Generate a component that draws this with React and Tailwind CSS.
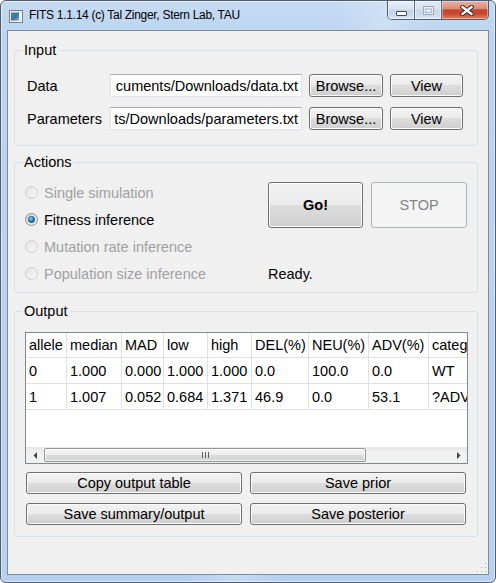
import React from 'react';

const btn =
  'flex items-center justify-center rounded-[3px] border border-[#707070] bg-[linear-gradient(180deg,#f2f2f2_0%,#ebebeb_50%,#dddddd_50%,#cfcfcf_100%)] shadow-[inset_0_0_0_1px_#fbfbfb] text-black';

const COLS = ['allele', 'median', 'MAD', 'low', 'high', 'DEL(%)', 'NEU(%)', 'ADV(%)', 'categ'];
const ROWS = [
  ['0', '1.000', '0.000', '1.000', '1.000', '0.0', '100.0', '0.0', 'WT'],
  ['1', '1.007', '0.052', '0.684', '1.371', '46.9', '0.0', '53.1', '?ADV'],
];

function TitleIcon() {
  return (
    <svg width="14" height="13" viewBox="0 0 14 13" className="ml-[8px] mt-[9px] shrink-0">
      <defs>
        <linearGradient id="ti" x1="0" y1="0" x2="1" y2="1">
          <stop offset="0" stopColor="#3d9a86" />
          <stop offset="0.55" stopColor="#3b74a8" />
          <stop offset="1" stopColor="#8fb0cf" />
        </linearGradient>
      </defs>
      <rect x="0.5" y="0.5" width="13" height="12" fill="#e9ecef" stroke="#7b8088" />
      <rect x="2" y="2.5" width="8" height="8" fill="url(#ti)" />
      <rect x="11" y="3" width="1.4" height="3" fill="#ffffff" />
      <rect x="11" y="7" width="1.4" height="1.4" fill="#ffffff" />
    </svg>
  );
}

function CaptionButtons() {
  return (
    <div className="ml-auto mr-[6px] flex h-[19px] shrink-0 overflow-hidden rounded-b-[5px] border-x border-b border-[#4f5f71]">
      <div className="flex w-[26px] justify-center bg-[linear-gradient(180deg,#e8eff8_0%,#d8e4f2_45%,#c3d4e9_50%,#c8d9ed_80%,#dbe8f6_100%)] pt-[10px] shadow-[inset_0_0_0_1px_rgba(255,255,255,0.55)]">
        <svg width="11" height="5" viewBox="0 0 11 5">
          <rect x="0.5" y="0.5" width="10" height="4" rx="0.5" fill="#ffffff" stroke="#394b60" />
        </svg>
      </div>
      <div className="w-px bg-[#5b6b7d]" />
      <div className="flex w-[26px] justify-center bg-[linear-gradient(180deg,#e3ebf5_0%,#d6e1ee_45%,#c9d7e8_50%,#cfdcec_80%,#dde8f4_100%)] pt-[5px] shadow-[inset_0_0_0_1px_rgba(255,255,255,0.5)]">
        <svg width="11" height="9" viewBox="0 0 11 9">
          <rect x="0.5" y="0.5" width="10" height="8" fill="#e6edf6" stroke="#9aabbf" />
          <rect x="2.5" y="3" width="6" height="3.5" fill="none" stroke="#a9b8ca" />
        </svg>
      </div>
      <div className="w-px bg-[#5b6b7d]" />
      <div className="flex w-[46px] justify-center bg-[linear-gradient(180deg,#eab1a4_0%,#de8c7a_42%,#c6432e_50%,#c74a33_72%,#e28061_100%)] pt-[4px] pl-[3px] shadow-[inset_0_0_0_1px_rgba(255,255,255,0.4)]">
        <svg width="14" height="11" viewBox="0 0 14 11">
          <path d="M2.5 2 L11.5 9 M11.5 2 L2.5 9" stroke="#3a2a28" strokeWidth="4.2" strokeLinecap="square" />
          <path d="M2.5 2 L11.5 9 M11.5 2 L2.5 9" stroke="#ffffff" strokeWidth="2.3" strokeLinecap="square" />
        </svg>
      </div>
    </div>
  );
}

function Radio({ label, checked, disabled }) {
  return (
    <div className="flex h-[27px] items-center">
      <svg width="13" height="13" viewBox="0 0 13 13" className="shrink-0">
        <defs>
          <linearGradient id="rbOn" x1="0" y1="0" x2="1" y2="1">
            <stop offset="0" stopColor="#d0d0d0" />
            <stop offset="1" stopColor="#f8f8f8" />
          </linearGradient>
          <linearGradient id="rbOff" x1="0" y1="0" x2="1" y2="1">
            <stop offset="0" stopColor="#e4e4e4" />
            <stop offset="1" stopColor="#f7f7f7" />
          </linearGradient>
          <radialGradient id="rdot" cx="0.4" cy="0.35" r="0.75">
            <stop offset="0" stopColor="#92d4f8" />
            <stop offset="0.55" stopColor="#2b7cba" />
            <stop offset="1" stopColor="#1a4d7a" />
          </radialGradient>
        </defs>
        <circle
          cx="6.5"
          cy="6.5"
          r="6"
          fill={disabled ? 'url(#rbOff)' : 'url(#rbOn)'}
          stroke={disabled ? '#cdcdcd' : '#8e8f8f'}
        />
        {checked && <circle cx="6.5" cy="6.5" r="3.2" fill="url(#rdot)" stroke="#1f4f78" strokeWidth="0.6" />}
      </svg>
      <span className={`ml-[6px] whitespace-nowrap ${disabled ? 'text-[#a0a0a0]' : 'text-black'}`}>{label}</span>
    </div>
  );
}

function PathRow({ label, value }) {
  return (
    <div className="flex h-[23px] items-center">
      <span className="w-[83px] shrink-0">{label}</span>
      <div className="flex h-[23px] w-[192px] shrink-0 items-center justify-end overflow-hidden border border-[#e2e3ea] border-t-[#abadb3] bg-white pr-[3px]">
        <span className="shrink-0 whitespace-nowrap">{value}</span>
      </div>
      <button className={`${btn} ml-[7px] h-[23px] w-[74px]`}>Browse...</button>
      <button className={`${btn} ml-[7px] h-[23px] w-[73px]`}>View</button>
    </div>
  );
}

function TableRow({ cells, h }) {
  return (
    <div className={`grid shrink-0 grid-cols-[41px_55px_42px_44px_44px_57px_60px_60px_38px] ${h}`}>
      {cells.map((c, i) => (
        <div
          key={i}
          className={`flex items-center overflow-hidden whitespace-nowrap border-b border-[#e0e0e0] pl-[3px] ${i < cells.length - 1 ? 'border-r' : ''}`}
        >
          {c}
        </div>
      ))}
    </div>
  );
}

function Scrollbar() {
  return (
    <div className="flex h-[16px] shrink-0 items-center bg-[linear-gradient(180deg,#e6e6e6_0%,#f1f1f1_35%,#f1f1f1_100%)]">
      <div className="flex h-full w-[17px] items-center justify-center">
        <svg width="4" height="7" viewBox="0 0 4 7">
          <path d="M4 0 L0.5 3.5 L4 7 Z" fill="#404040" />
        </svg>
      </div>
      <div className="ml-[1px] flex h-[14px] w-[322px] items-center justify-center rounded-[2px] border border-[#979797] bg-[linear-gradient(180deg,#f6f6f6_0%,#ececec_50%,#dcdcdc_50%,#d2d2d2_100%)] shadow-[inset_0_0_0_1px_rgba(255,255,255,0.7)]">
        <svg width="7" height="6" viewBox="0 0 7 6">
          <path d="M0.5 0 V6 M3.5 0 V6 M6.5 0 V6" stroke="#5e5e5e" strokeWidth="1" />
        </svg>
      </div>
      <div className="ml-auto flex h-full w-[17px] items-center justify-center">
        <svg width="4" height="7" viewBox="0 0 4 7">
          <path d="M0 0 L3.5 3.5 L0 7 Z" fill="#404040" />
        </svg>
      </div>
    </div>
  );
}

export default function App() {
  return (
    <div className="flex h-[583px] w-[496px] flex-col overflow-hidden rounded-[6px] border border-[#4d5d70] bg-[linear-gradient(105deg,rgba(255,255,255,0)_52%,rgba(255,255,255,0.22)_60%,rgba(255,255,255,0)_68%),linear-gradient(180deg,#c6dbf2_0%,#bcd4ef_6%,#b6d0ee_100%)] font-['Liberation_Sans',Arial,sans-serif] shadow-[inset_0_0_0_1px_rgba(255,255,255,0.5)]">
      {/* Title bar */}
      <div className="flex h-[29px] shrink-0 items-start">
        <TitleIcon />
        <span className="ml-[6px] mt-[7px] whitespace-nowrap text-[12px] leading-[15px] tracking-[-0.3px] text-black">
          FITS 1.1.14 (c) Tal Zinger, Stern Lab, TAU
        </span>
        <CaptionButtons />
      </div>

      {/* Client area */}
      <div className="relative mx-[6px] mb-[7px] flex-1 border border-[#7d8c9d] bg-[#f0f0f0] text-[14.5px] leading-[16px] text-black">
        {/* Input */}
        <fieldset className="ml-[6px] mt-[11px] w-[464px] rounded-[3px] border border-[#d5dfe5]">
          <legend className="ml-[7px] px-[2px]">Input</legend>
          <div className="flex flex-col gap-[10px] pb-[15px] pl-[12px] pt-[16px]">
            <PathRow label="Data" value="cuments/Downloads/data.txt" />
            <PathRow label="Parameters" value="ts/Downloads/parameters.txt" />
          </div>
        </fieldset>

        {/* Actions */}
        <fieldset className="ml-[6px] mt-[8px] w-[464px] rounded-[3px] border border-[#d5dfe5]">
          <legend className="ml-[7px] px-[2px]">Actions</legend>
          <div className="flex pb-[5px] pl-[10px] pt-[9px]">
            <div className="flex w-[243px] flex-col">
              <Radio label="Single simulation" disabled />
              <Radio label="Fitness inference" checked />
              <Radio label="Mutation rate inference" disabled />
              <Radio label="Population size inference" disabled />
            </div>
            <div className="flex flex-col">
              <div className="mt-[3px] flex gap-[8px]">
                <button className={`${btn} h-[46px] w-[95px] font-bold`}>Go!</button>
                <button className="flex h-[46px] w-[96px] items-center justify-center rounded-[3px] border border-[#adb2b5] bg-[#f4f4f4] text-[#838383]">
                  STOP
                </button>
              </div>
              <div className="mt-[38px]">Ready.</div>
            </div>
          </div>
        </fieldset>

        {/* Output */}
        <fieldset className="ml-[6px] mt-[10px] w-[464px] rounded-[3px] border border-[#d5dfe5]">
          <legend className="ml-[7px] px-[2px]">Output</legend>
          <div className="pb-[11px] pl-[10px] pt-[13px]">
            <div className="flex h-[132px] w-[443px] flex-col border border-[#828790] bg-white">
              <TableRow cells={COLS} h="h-[25px]" />
              {ROWS.map((r, i) => (
                <TableRow key={i} cells={r} h="h-[26px]" />
              ))}
              <div className="flex-1" />
              <Scrollbar />
            </div>
            <div className="ml-[1px] mt-[8px] grid w-[440px] grid-cols-2 gap-x-[8px] gap-y-[9px]">
              <button className={`${btn} h-[22px]`}>Copy output table</button>
              <button className={`${btn} h-[22px]`}>Save prior</button>
              <button className={`${btn} h-[22px]`}>Save summary/output</button>
              <button className={`${btn} h-[22px]`}>Save posterior</button>
            </div>
          </div>
        </fieldset>

        {/* Size grip */}
        <svg width="12" height="12" viewBox="0 0 12 12" className="absolute bottom-0 right-0">
          {[
            [9, 1],
            [9, 5],
            [5, 5],
            [9, 9],
            [5, 9],
            [1, 9],
          ].map(([x, y], i) => (
            <g key={i}>
              <rect x={x + 1} y={y + 1} width="1" height="1" fill="#ffffff" />
              <rect x={x} y={y} width="1" height="1" fill="#a8a8a8" />
            </g>
          ))}
        </svg>
      </div>
    </div>
  );
}
